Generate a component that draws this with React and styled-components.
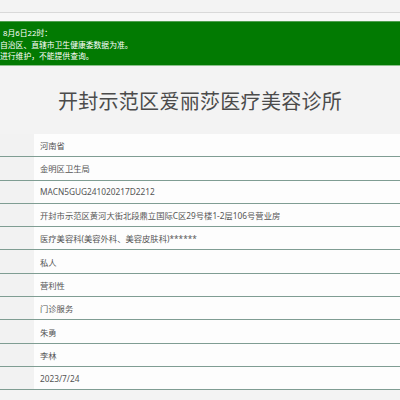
import React from 'react';
import styled, { createGlobalStyle } from 'styled-components';

const GlobalStyle = createGlobalStyle`
  html, body {
    margin: 0;
    padding: 0;
    background: #f3f3f3;
    overflow: hidden;
  }
  body {
    font-family: 'Noto Sans', 'Noto Sans CJK SC', sans-serif;
  }
`;

const Page = styled.div`
  width: 400px;
  height: 400px;
  overflow: hidden;
  background: #f3f3f3;
`;

const TopBar = styled.div`
  height: 12px;
  background: #f3f3f3;
  border-bottom: 1px solid #d9d9d9;
`;

const TopStrip = styled.div`
  height: 8px;
  background: #f7f7f7;
`;

const Notice = styled.div`
  height: 45px;
  box-sizing: border-box;
  padding-top: 6px;
  background: #027a02;
  border-top: 1px solid #4f9f4f;
  border-bottom: 1px solid #8cc08c;
  color: #fff;
  font-size: 7.8px;
  line-height: 11.6px;
  overflow: hidden;
`;

const NoticeLine = styled.div`
  white-space: nowrap;
  padding-left: ${props => props.$indent || 0}px;
`;

const Title = styled.h1`
  margin: 0;
  padding: 22px 0 18px;
  font-size: 20px;
  line-height: 28px;
  font-weight: 400;
  color: #4b4b4b;
  text-align: center;
  letter-spacing: 0.3px;
`;

const Table = styled.div`
  display: flex;
  flex-direction: column;
`;

const Row = styled.div`
  display: grid;
  grid-template-columns: 34px 1fr;
  height: 23.3px;
  box-sizing: border-box;
  border-bottom: 1.5px solid #7f9d93;
`;

const Label = styled.div`
  background: #f2f2f2;
`;

const Value = styled.div`
  background: #fdfdfd;
  display: flex;
  align-items: center;
  padding-left: 6px;
  font-size: 8.3px;
  color: #555;
  white-space: nowrap;
  overflow: hidden;
`;

const notice = [
  { text: '8月6日22时：', indent: 3 },
  { text: '自治区、直辖市卫生健康委数据为准。', indent: 0 },
  { text: '进行维护，不能提供查询。', indent: 0 },
];

const rows = [
  '河南省',
  '金明区卫生局',
  'MACN5GUG241020217D2212',
  '开封市示范区黄河大街北段鼎立国际C区29号楼1-2层106号营业房',
  '医疗美容科(美容外科、美容皮肤科)******',
  '私人',
  '营利性',
  '门诊服务',
  '朱勇',
  '李林',
  '2023/7/24',
];

const App = () => {
  return (
    <>
      <GlobalStyle />
      <Page>
        <TopBar />
        <TopStrip />
        <Notice>
          {notice.map(line => (
            <NoticeLine key={line.text} $indent={line.indent}>
              {line.text}
            </NoticeLine>
          ))}
        </Notice>
        <Title>开封示范区爱丽莎医疗美容诊所</Title>
        <Table>
          {rows.map((value, index) => (
            <Row key={`row${index}`}>
              <Label />
              <Value>{value}</Value>
            </Row>
          ))}
        </Table>
      </Page>
    </>
  );
};

export default App;
